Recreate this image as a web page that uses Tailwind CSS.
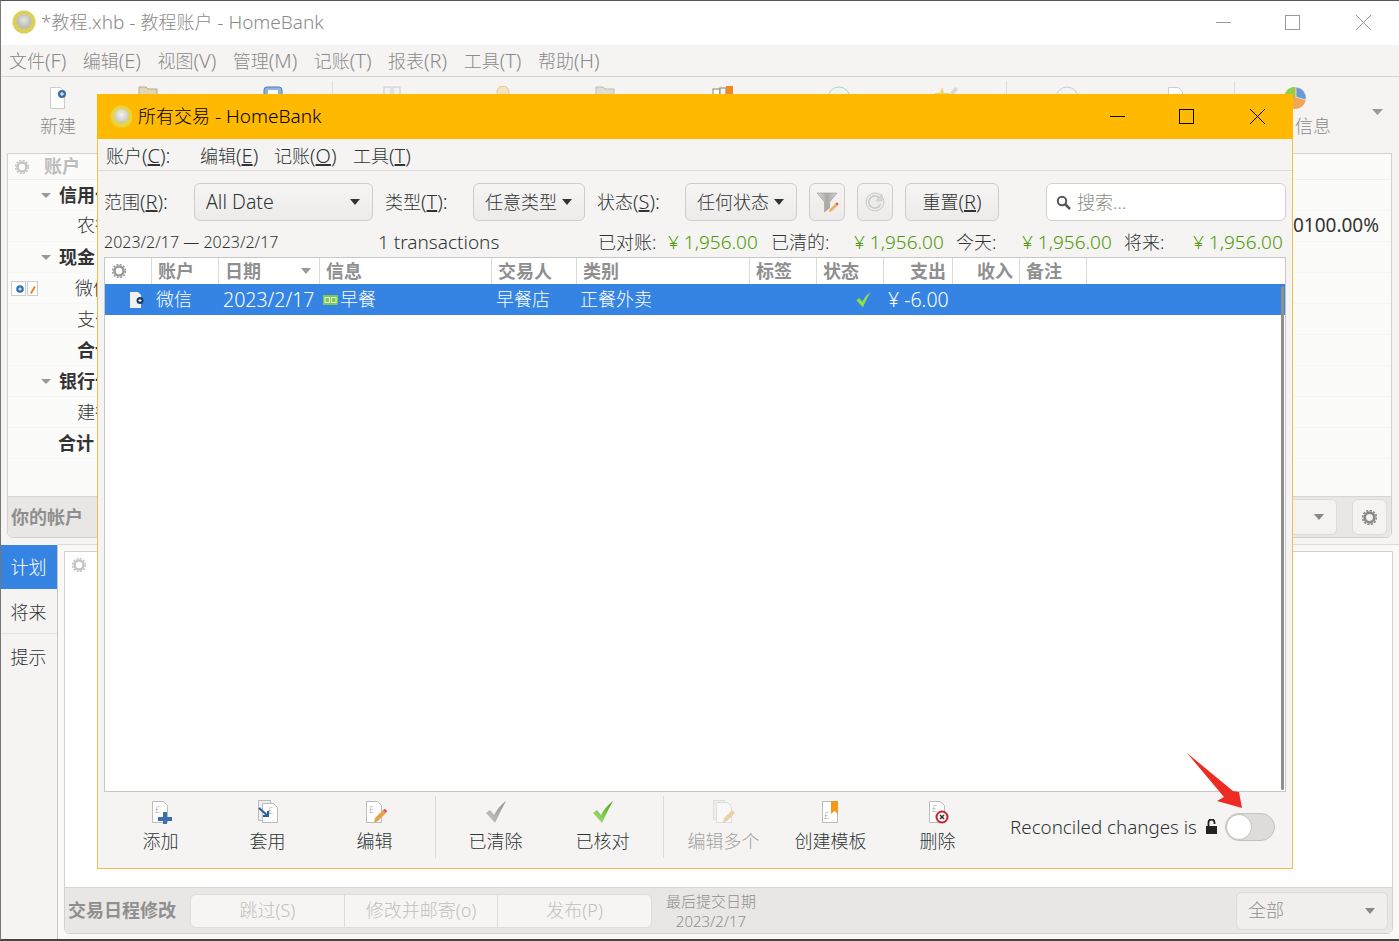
<!DOCTYPE html>
<html lang="zh-CN">
<head>
<meta charset="UTF-8">
<title>HomeBank</title>
<script src="https://cdn.jsdelivr.net/npm/@tailwindcss/browser@4"></script>
</head>
<body class="bg-[#f5f4f3]">
<div class="relative w-[1399px] h-[941px] overflow-hidden flex flex-col border-t border-t-[#555] border-l border-l-[#777] border-b-2 border-b-[#444] text-[18px] text-[#2e3436] font-['Noto_Sans','Noto_Sans_CJK_SC',sans-serif] font-light">

  <!-- main window -->
  <div class="h-[44px] shrink-0 bg-white flex items-center pb-[2px]">
    <svg class="ml-[11px] w-[24px] h-[24px]" viewBox="0 0 24 24"><defs><radialGradient id="coin" cx="50%" cy="40%" r="60%"><stop offset="0" stop-color="#e6e6e2"/><stop offset="1" stop-color="#b4b4ae"/></radialGradient></defs><circle cx="12" cy="12" r="11.500" fill="#dccf55"/><circle cx="12" cy="11.500" r="7.500" fill="url(#coin)"/></svg>
    <span class="ml-[5px] text-[#8a8a8a] text-[19px]">*<span class="text-[18px]">教程</span>.xhb - <span class="text-[18px]">教程账户</span> - HomeBank</span>
    <div class="ml-auto flex items-center mr-[28px]">
      <svg class="w-[15px] h-[15px] mr-[54px]" viewBox="0 0 15 15"><path d="M0 7.500h15" stroke="#999" fill="none"/></svg>
      <svg class="w-[15px] h-[15px] mr-[56px]" viewBox="0 0 15 15"><rect x=".5" y=".5" width="14" height="14" stroke="#999" fill="none"/></svg>
      <svg class="w-[15px] h-[15px]" viewBox="0 0 15 15"><path d="M0 0l15 15M15 0L0 15" stroke="#999" fill="none"/></svg>
    </div>
  </div>
  <div class="h-[32px] shrink-0 border-b border-[#d8d6d3] flex items-center gap-[16.500px] pl-[8px] pt-[1px] text-[#8a8a8a]">
    <span>文件<span class="text-[20px]">(F)</span></span><span>编辑<span class="text-[20px]">(E)</span></span><span>视图<span class="text-[20px]">(V)</span></span><span>管理<span class="text-[20px]">(M)</span></span><span>记账<span class="text-[20px]">(T)</span></span><span>报表<span class="text-[20px]">(R)</span></span><span>工具<span class="text-[20px]">(T)</span></span><span>帮助<span class="text-[20px]">(H)</span></span>
  </div>
  <div class="h-[76px] shrink-0 flex text-[#8a8a8a]">
    <div class="w-[114px] flex flex-col items-center pt-[9px]">
      <svg class="w-[24px] h-[24px]" viewBox="0 0 24 24"><path d="M4.500 1.500h10l4 4v17h-14z" fill="#fff" stroke="#ccc"/><circle cx="16" cy="8" r="4" fill="#3b6ea8"/><path d="M14 8h4M16 6v4" stroke="#fff"/></svg>
      <span class="mt-[3px]">新建</span>
    </div>
    <div class="w-[217px] flex items-start pt-[9px]">
      <svg class="ml-[21px] w-[24px] h-[24px]" viewBox="0 0 24 24"><path d="M3 1h7l2 2h9v18H3z" fill="#e2d6b4" stroke="#b8ac8c"/></svg>
      <svg class="ml-[101px] w-[24px] h-[24px]" viewBox="0 0 24 24"><rect x="3" y="1" width="18" height="20" rx="3" fill="#8fb2dc" stroke="#4d7fb8"/><rect x="7" y="4" width="10" height="5" fill="#fff"/></svg>
    </div>
    <div class="w-[1px] h-[50px] bg-[#ddd] mt-[4px]"></div>
    <div class="w-[673px] flex items-start pt-[9px]">
      <svg class="ml-[48px] w-[24px] h-[24px]" viewBox="0 0 24 24"><rect x="3" y="1" width="7" height="20" fill="#f2f2f2" stroke="#ccc"/><rect x="12" y="1" width="7" height="20" fill="#f2f2f2" stroke="#ccc"/></svg>
      <svg class="ml-[83px] w-[24px] h-[24px]" viewBox="0 0 24 24"><circle cx="15" cy="6" r="6" fill="#f5e3c0" stroke="#e0c490"/><path d="M1 21V12q0-5 14-5v14z" fill="#f5e3c0"/></svg>
      <svg class="ml-[81px] w-[24px] h-[24px]" viewBox="0 0 24 24"><path d="M3 1h7l2 2h9v18H3z" fill="#e0ddd2" stroke="#bbb"/></svg>
      <svg class="ml-[94px] w-[24px] h-[24px]" viewBox="0 0 24 24"><rect x="2" y="3" width="7" height="18" fill="#fff" stroke="#886"/><rect x="9" y="2" width="6" height="19" fill="#f2f2f2" stroke="#886"/><rect x="15" y="0" width="7" height="21" fill="#f08a24"/></svg>
      <svg class="ml-[92px] w-[24px] h-[24px]" viewBox="0 0 24 24"><circle cx="12" cy="12" r="11" fill="#eef6f0" stroke="#b4d2c2"/></svg>
      <svg class="ml-[84px] w-[24px] h-[24px]" viewBox="0 0 24 24"><path d="M7 1l2 6h6l-5 4 2 6-5-4-5 4 2-6-5-4h6z" fill="#ecd674"/><path d="M15 7l5-6 3 2-5 7z" fill="#d8d8d2"/></svg>
    </div>
    <div class="w-[1px] h-[50px] bg-[#ddd] mt-[4px]"></div>
    <div class="w-[227px] flex items-start pt-[9px]">
      <svg class="ml-[48px] w-[24px] h-[24px]" viewBox="0 0 24 24"><circle cx="12" cy="12" r="11" fill="#f4f4f4" stroke="#ccc"/></svg>
      <svg class="ml-[85px] w-[24px] h-[24px]" viewBox="0 0 24 24"><path d="M4.500 1.500h10l4 4v17h-14z" fill="#fff" stroke="#ccc"/></svg>
    </div>
    <div class="w-[1px] h-[50px] bg-[#ddd] mt-[4px]"></div>
    <div class="w-[72px] ml-[24px] flex flex-col items-center pt-[9px]">
      <svg class="w-[24px] h-[24px]" viewBox="0 0 24 24"><circle cx="12" cy="12" r="11" fill="#f0a858"/><path d="M12 12V1A11 11 0 0 0 2 8z" fill="#8fd050"/><path d="M13 11V1A11 11 0 0 1 23 14z" fill="#6a9ad0" stroke="#fff" stroke-width=".6"/></svg>
      <span class="mt-[3px]">账户信息</span>
    </div>
    <svg class="ml-[41px] mt-[32px] w-[11px] h-[6px]" viewBox="0 0 11 6"><path d="M0 0h11L5.500 6z" fill="#999"/></svg>
  </div>
  <div class="ml-[6px] mr-[7px] h-[385px] shrink-0 border border-[#d3d1ce] rounded-b-md bg-[#fbfbfa] flex flex-col">
    <div class="h-[26px] border-b border-[#f0f0ef] flex items-center pl-[7px] text-[#bdbdbd] font-bold">
      <svg class="w-[14px] h-[14px]" viewBox="0 0 14 14"><circle cx="7" cy="7" r="4.500" fill="none" stroke="#c4c4c4" stroke-width="2.500"/><circle cx="7" cy="7" r="6.500" fill="none" stroke="#c4c4c4" stroke-width="1.500" stroke-dasharray="2 1.400"/></svg>
      <span class="ml-[15px]">账户</span>
    </div>
    <div class="flex-1 flex flex-col text-[#333]">
      <div class="h-[31px] flex items-center border-b border-[#f6f6f5] pl-[33px] font-bold"><span class="mr-[8px] border-x-[5px] border-x-transparent border-t-[5px] border-t-[#999]"></span>信用卡</div>
      <div class="h-[31px] flex items-center border-b border-[#f6f6f5] pl-[69px] pb-[2px]">农行<span class="ml-auto mr-[12px] text-[19px] font-normal">0100.00%</span></div>
      <div class="h-[31px] flex items-center border-b border-[#f6f6f5] pl-[33px] font-bold"><span class="mr-[8px] border-x-[5px] border-x-transparent border-t-[5px] border-t-[#999]"></span>现金</div>
      <div class="h-[31px] flex items-center border-b border-[#f6f6f5] pl-[3px]">
        <svg class="w-[15px] h-[15px]" viewBox="0 0 15 15"><rect x=".5" y=".5" width="14" height="14" fill="#fff" stroke="#ccc"/><circle cx="9" cy="8" r="3.800" fill="#2f6fb0"/><path d="M7.300 8h3.400M9 6.300v3.400" stroke="#fff"/></svg>
        <svg class="w-[11px] h-[15px] ml-[1px] mr-[37px]" viewBox="0 0 11 15"><rect x=".5" y=".5" width="10" height="14" fill="#fff" stroke="#ccc"/><path d="M3 12l4-7 1.800 1-4 7z" fill="#e08a2c"/></svg>
        微信
      </div>
      <div class="h-[31px] flex items-center border-b border-[#f6f6f5] pl-[69px]">支付宝</div>
      <div class="h-[31px] flex items-center border-b border-[#f6f6f5] pl-[69px] font-bold">合计</div>
      <div class="h-[31px] flex items-center border-b border-[#f6f6f5] pl-[33px] font-bold"><span class="mr-[8px] border-x-[5px] border-x-transparent border-t-[5px] border-t-[#999]"></span>银行卡</div>
      <div class="h-[31px] flex items-center border-b border-[#f6f6f5] pl-[69px]">建行</div>
      <div class="h-[31px] flex items-center border-b border-[#f6f6f5] pl-[50px] font-bold">合计</div>
    </div>
    <div class="h-[41px] bg-[#e8e7e5] border-t border-[#d8d6d3] rounded-b-md flex items-center pl-[3px] text-[#8f8f8f] font-bold">
      你的帐户
      <div class="ml-auto flex items-center">
        <div class="w-[100px] h-[36px] border border-[#dedcd9] rounded-md bg-[#f4f3f2] flex items-center justify-end pr-[12px]"><svg class="w-[10px] h-[6px]" viewBox="0 0 10 6"><path d="M0 0h10L5 6z" fill="#888"/></svg></div>
        <div class="ml-[15px] mr-[4px] w-[35px] h-[36px] border border-[#dedcd9] rounded-md bg-[#f4f3f2] flex items-center justify-center"><svg class="w-[15px] h-[15px]" viewBox="0 0 14 14"><circle cx="7" cy="7" r="4.500" fill="none" stroke="#888" stroke-width="2.500"/><circle cx="7" cy="7" r="6.500" fill="none" stroke="#888" stroke-width="1.500" stroke-dasharray="2 1.400"/></svg></div>
      </div>
    </div>
  </div>
  <div class="flex-1 flex mt-[7px] mb-[5px] min-h-0">
    <div class="w-[57px] shrink-0 border-r border-[#c8c6c3] flex flex-col -mb-[5px]">
      <div class="h-[44px] bg-[#3584e4] text-white flex items-center justify-center pr-[1px]">计划</div>
      <div class="h-[45px] pt-[3px] pr-[1px] border-b border-[#e3e2e0] flex items-center justify-center">将来</div>
      <div class="h-[45px] pt-[2px] pr-[1px] flex items-center justify-center">提示</div>
    </div>
    <div class="flex-1 flex flex-col border-t border-[#dcdad7] bg-[#faf9f8] -mt-px -mb-[5px] pb-[5px] pt-[6px] pl-[6px] pr-[6px]">
      <div class="flex-1 border border-[#d3d1ce] rounded-b-md bg-white flex flex-col">
        <div class="h-[26px] flex items-center pl-[7px]"><svg class="w-[14px] h-[14px]" viewBox="0 0 14 14"><circle cx="7" cy="7" r="4.500" fill="none" stroke="#c4c4c4" stroke-width="2.500"/><circle cx="7" cy="7" r="6.500" fill="none" stroke="#c4c4c4" stroke-width="1.500" stroke-dasharray="2 1.400"/></svg></div>
        <div class="flex-1"></div>
        <div class="h-[46px] bg-[#e8e7e5] border-t border-[#d8d6d3] rounded-b-md flex items-center pl-[3px] text-[#8f8f8f]">
          <span class="font-bold w-[122px]">交易日程修改</span>
          <div class="flex h-[34px] w-[462px] border border-[#dedcd9] rounded-md bg-[#f6f5f4] text-[#c0c0c0]">
            <span class="flex-1 flex items-center justify-center border-r border-[#dedcd9]">跳过(S)</span>
            <span class="flex-1 flex items-center justify-center border-r border-[#dedcd9]">修改并邮寄(o)</span>
            <span class="flex-1 flex items-center justify-center">发布(P)</span>
          </div>
          <div class="ml-[14px] w-[90px] flex flex-col items-center text-[15px] leading-[20px]"><span>最后提交日期</span><span>2023/2/17</span></div>
          <div class="ml-auto mr-[4px] w-[152px] h-[38px] border border-[#dedcd9] rounded-md bg-[#f0efee] flex items-center pl-[11px]">全部<svg class="ml-auto mr-[12px] w-[10px] h-[6px]" viewBox="0 0 10 6"><path d="M0 0h10L5 6z" fill="#888"/></svg></div>
        </div>
      </div>
    </div>
  </div>

  <!-- dialog window on top -->
  <div class="absolute left-[96px] top-[93px] w-[1196px] h-[775px] bg-[#f5f4f3] border-x border-b border-[#efc050] flex flex-col">
    <div class="h-[45px] shrink-0 -mx-px bg-[#ffb900] flex items-center text-black font-normal">
      <svg class="ml-[13px] w-[23px] h-[23px]" viewBox="0 0 24 24"><defs><radialGradient id="coin2" cx="50%" cy="40%" r="60%"><stop offset="0" stop-color="#f2f2ee"/><stop offset="1" stop-color="#c4c4bc"/></radialGradient></defs><circle cx="12" cy="12" r="11.500" fill="#e8d440"/><circle cx="12" cy="11.500" r="7.500" fill="url(#coin2)"/></svg>
      <span class="ml-[5px] font-light text-[19px]"><span class="text-[18px]">所有交易</span> - HomeBank</span>
      <div class="ml-auto flex items-center mr-[28px]">
        <svg class="w-[15px] h-[15px] mr-[54px]" viewBox="0 0 15 15"><path d="M0 7.500h15" stroke="#000" fill="none"/></svg>
        <svg class="w-[15px] h-[15px] mr-[56px]" viewBox="0 0 15 15"><rect x=".5" y=".5" width="14" height="14" stroke="#000" fill="none"/></svg>
        <svg class="w-[15px] h-[15px]" viewBox="0 0 15 15"><path d="M0 0l15 15M15 0L0 15" stroke="#000" fill="none"/></svg>
      </div>
    </div>
    <div class="h-[32px] shrink-0 border-b border-[#dcdad7] flex items-center pl-[8px] pt-[3px]">
      <span class="w-[94px]">账户<span class="text-[20px]">(<u>C</u>):</span></span><span class="w-[74px]">编辑<span class="text-[20px]">(<u>E</u>)</span></span><span class="w-[79px]">记账<span class="text-[20px]">(<u>O</u>)</span></span><span>工具<span class="text-[20px]">(<u>T</u>)</span></span>
    </div>
    <div class="h-[38px] mt-[12px] shrink-0 flex items-center pl-[6px]">
      <span class="w-[90px]">范围<span class="text-[20px]">(<u>R</u>):</span></span>
      <div class="w-[179px] h-[38px] border border-[#cfcdc9] rounded-md bg-linear-to-b from-[#f6f5f4] to-[#edebe9] flex items-center pl-[11px] text-[19.500px]">All Date<svg class="ml-auto mr-[12px] w-[10px] h-[6px]" viewBox="0 0 10 6"><path d="M0 0h10L5 6z" fill="#2e3436"/></svg></div>
      <span class="ml-[12px] w-[88px]">类型<span class="text-[20px]">(<u>T</u>):</span></span>
      <div class="w-[112px] h-[38px] border border-[#cfcdc9] rounded-md bg-linear-to-b from-[#f6f5f4] to-[#edebe9] flex items-center pl-[11px]">任意类型<svg class="ml-[5px] w-[10px] h-[6px]" viewBox="0 0 10 6"><path d="M0 0h10L5 6z" fill="#2e3436"/></svg></div>
      <span class="ml-[12px] w-[88px]">状态<span class="text-[20px]">(<u>S</u>):</span></span>
      <div class="w-[112px] h-[38px] border border-[#cfcdc9] rounded-md bg-linear-to-b from-[#f6f5f4] to-[#edebe9] flex items-center pl-[11px]">任何状态<svg class="ml-[5px] w-[10px] h-[6px]" viewBox="0 0 10 6"><path d="M0 0h10L5 6z" fill="#2e3436"/></svg></div>
      <div class="ml-[12px] w-[36px] h-[38px] border border-[#cfcdc9] rounded-md bg-linear-to-b from-[#f6f5f4] to-[#edebe9] flex items-center justify-center">
        <svg class="w-[24px] h-[24px]" viewBox="0 0 24 24"><defs><linearGradient id="fun" x1="0" x2="1" y1="0" y2="0"><stop offset="0" stop-color="#dcdcd8"/><stop offset=".5" stop-color="#a8a8a4"/><stop offset="1" stop-color="#d4d4d0"/></linearGradient></defs><path d="M2 3h20l-7.500 9v6l-5 4V12z" fill="url(#fun)" stroke="#8a8a85" stroke-width=".5"/><path d="M14 22l.5-2.500 6-6 2 2-6 6z" fill="#eeb060"/><path d="M20.500 13.500l2 2 1-1.500-1.500-1.500z" fill="#d9454a"/></svg>
      </div>
      <div class="ml-[12px] w-[36px] h-[38px] border border-[#cfcdc9] rounded-md bg-linear-to-b from-[#f6f5f4] to-[#edebe9] flex items-center justify-center">
        <svg class="w-[22px] h-[22px]" viewBox="0 0 22 22"><circle cx="11" cy="11" r="9" fill="#ececea" stroke="#c8c8c4"/><path d="M16 8a6 6 0 1 0 .5 5" fill="none" stroke="#c8c8c4" stroke-width="1.500"/><path d="M18 3v7h-6z" fill="#d8d8d4" stroke="#c0c0bc" stroke-width=".5"/></svg>
      </div>
      <div class="ml-[12px] w-[94px] h-[38px] border border-[#cfcdc9] rounded-md bg-linear-to-b from-[#f6f5f4] to-[#edebe9] flex items-center justify-center"><span>重置<span class="text-[20px]">(<u>R</u>)</span></span></div>
      <div class="ml-[47px] w-[240px] h-[38px] border border-[#d3d1ce] rounded-md bg-white flex items-center pl-[9px] text-[#8a8a8a]">
        <svg class="w-[15px] h-[15px] mr-[6px]" viewBox="0 0 15 15"><circle cx="6" cy="6" r="4.200" fill="none" stroke="#555" stroke-width="2"/><path d="M9 9l5 5" stroke="#555" stroke-width="2.500"/></svg>
        搜索...
      </div>
    </div>
    <div class="h-[36px] shrink-0 flex items-center pl-[6px] pt-[6px]">
      <span class="text-[16px] w-[274px]">2023/2/17 — 2023/2/17</span>
      <span class="w-[220px] text-[19px]">1 transactions</span>
      <span class="w-[70px]">已对账:</span><span class="w-[103px] text-[19px] text-[#4e9a06]">¥ 1,956.00</span>
      <span class="w-[83px]">已清的:</span><span class="w-[102px] text-[19px] text-[#4e9a06]">¥ 1,956.00</span>
      <span class="w-[66px]">今天:</span><span class="w-[102px] text-[19px] text-[#4e9a06]">¥ 1,956.00</span>
      <span class="w-[69px]">将来:</span><span class="text-[19px] text-[#4e9a06]">¥ 1,956.00</span>
    </div>
    <div class="mx-[6px] h-[535px] shrink-0 border border-[#c9c7c4] bg-white flex flex-col relative">
      <div class="h-[26px] shrink-0 flex text-[#8f8f8f] font-bold">
        <div class="w-[47px] border-r border-[#dcdad7] flex items-center pl-[7px]"><svg class="w-[14px] h-[14px]" viewBox="0 0 14 14"><circle cx="7" cy="7" r="4.500" fill="none" stroke="#999" stroke-width="2.500"/><circle cx="7" cy="7" r="6.500" fill="none" stroke="#999" stroke-width="1.500" stroke-dasharray="2 1.400"/></svg></div>
        <div class="w-[67px] border-r border-[#dcdad7] flex items-center pl-[6px]">账户</div>
        <div class="w-[101px] border-r border-[#dcdad7] flex items-center pl-[6px]">日期<svg class="ml-auto mr-[8px] w-[10px] h-[6px]" viewBox="0 0 10 6"><path d="M0 0h10L5 6z" fill="#999"/></svg></div>
        <div class="w-[172px] border-r border-[#dcdad7] flex items-center pl-[6px]">信息</div>
        <div class="w-[85px] border-r border-[#dcdad7] flex items-center pl-[6px]">交易人</div>
        <div class="w-[173px] border-r border-[#dcdad7] flex items-center pl-[6px]">类别</div>
        <div class="w-[67px] border-r border-[#dcdad7] flex items-center pl-[6px]">标签</div>
        <div class="w-[67px] border-r border-[#dcdad7] flex items-center pl-[6px]">状态</div>
        <div class="w-[69px] border-r border-[#dcdad7] flex items-center justify-end pr-[6px]">支出</div>
        <div class="w-[67px] border-r border-[#dcdad7] flex items-center justify-end pr-[6px]">收入</div>
        <div class="w-[67px] border-r border-[#dcdad7] flex items-center pl-[6px]">备注</div>
      </div>
      <div class="h-[31px] shrink-0 bg-[#3584e4] text-white flex items-center">
        <div class="w-[47px] pl-[23px]">
          <svg class="w-[18px] h-[18px]" viewBox="0 0 18 18"><path d="M2 1h8l3 3v13H2z" fill="#f2f2f2"/><circle cx="12" cy="9.500" r="3.500" fill="#1d3f66"/><path d="M10.500 9.500h3M12 8v3" stroke="#fff"/></svg>
        </div>
        <div class="w-[67px] pl-[4px]">微信</div>
        <div class="w-[101px] pl-[4px] text-[19.500px]">2023/2/17</div>
        <div class="w-[172px] pl-[3px] flex items-center">
          <svg class="w-[15px] h-[10px] mr-[2px]" viewBox="0 0 15 10"><rect width="15" height="10" fill="#7ec850"/><rect x="2" y="2.500" width="4.500" height="5" fill="none" stroke="#fff" stroke-width=".8"/><rect x="8.500" y="2.500" width="4.500" height="5" fill="none" stroke="#fff" stroke-width=".8"/></svg>
          早餐
        </div>
        <div class="w-[85px] pl-[4px]">早餐店</div>
        <div class="w-[173px] pl-[3px]">正餐外卖</div>
        <div class="w-[67px]"></div>
        <div class="w-[67px] flex justify-end pr-[12px]">
          <svg class="w-[17px] h-[17px]" viewBox="0 0 24 24"><path d="M2 13L6 10L10 15Q14 7 22 1Q17 10 11 23Z" fill="#8fe04a"/></svg>
        </div>
        <div class="w-[69px] pl-[4px] text-[19.500px]">¥ -6.00</div>
      </div>
      <div class="absolute right-[1px] top-[28px] bottom-[1px] w-[3px] rounded-full bg-[#8f8f8f]"></div>
    </div>
    <div class="flex-1 flex items-center pl-[9px] pb-[6px]">
      <div class="w-[107px] flex flex-col items-center">
        <svg class="w-[24px] h-[24px]" viewBox="0 0 24 24"><path d="M3.500 1.500h11l4 4v17h-15z" fill="#fff" stroke="#bbb"/><text x="6" y="13" font-size="9" fill="#aaa">£</text><path d="M14 12h4v5h5v4h-5v3h-4v-3H9v-4h5z" fill="#3b70b0"/></svg>
        <span class="mt-[4px]">添加</span>
      </div>
      <div class="w-[107px] flex flex-col items-center">
        <svg class="w-[24px] h-[24px]" viewBox="0 0 24 24"><path d="M2.500.5h12v20h-12z" fill="#eee" stroke="#bbb"/><path d="M6.500 3.500h11l4 4v15h-15z" fill="#fff" stroke="#bbb"/><text x="12" y="14" font-size="9" fill="#aaa">£</text><path d="M3 8l9 8M12 11v5H7" stroke="#2b5c9c" stroke-width="2" fill="none"/></svg>
        <span class="mt-[4px]">套用</span>
      </div>
      <div class="w-[107px] flex flex-col items-center">
        <svg class="w-[24px] h-[24px]" viewBox="0 0 24 24"><path d="M3.500 1.500h11l4 4v17h-15z" fill="#fff" stroke="#bbb"/><text x="6" y="13" font-size="9" fill="#aaa">£</text><path d="M11 23l1-5 8-8 3 3-8 8z" fill="#e8a04a"/><path d="M20 10l3 3 1-2-2-2z" fill="#d9454a"/></svg>
        <span class="mt-[4px]">编辑</span>
      </div>
      <div class="w-[1px] h-[62px] bg-[#dcdad7] ml-[7px] mr-[6px]"></div>
      <div class="w-[107px] flex flex-col items-center">
        <svg class="w-[24px] h-[24px]" viewBox="0 0 24 24"><defs><linearGradient id="gr" x1="0" x2="1" y1="1" y2="0"><stop offset="0" stop-color="#c8c8c5"/><stop offset="1" stop-color="#8e8e8b"/></linearGradient></defs><path d="M2 13L6 10L10 15Q14 7 22 1Q17 10 11 23Z" fill="url(#gr)"/></svg>
        <span class="mt-[4px]">已清除</span>
      </div>
      <div class="w-[107px] flex flex-col items-center">
        <svg class="w-[24px] h-[24px]" viewBox="0 0 24 24"><defs><linearGradient id="gn" x1="0" x2="1" y1="1" y2="0"><stop offset="0" stop-color="#b0e878"/><stop offset="1" stop-color="#4aa020"/></linearGradient></defs><path d="M2 13L6 10L10 15Q14 7 22 1Q17 10 11 23Z" fill="url(#gn)"/></svg>
        <span class="mt-[4px]">已核对</span>
      </div>
      <div class="w-[1px] h-[62px] bg-[#dcdad7] ml-[7px] mr-[6px]"></div>
      <div class="w-[107px] flex flex-col items-center text-[#a0a0a0]">
        <svg class="w-[24px] h-[24px]" viewBox="0 0 24 24"><path d="M1.500.5h11v19h-11z" fill="#eee" stroke="#ddd"/><path d="M4.500 2.500h11l4 4v16h-15z" fill="#f8f8f8" stroke="#ddd"/><path d="M11 23l1-5 8-8 3 3-8 8z" fill="#ebcfa8"/></svg>
        <span class="mt-[4px]">编辑多个</span>
      </div>
      <div class="w-[107px] flex flex-col items-center">
        <svg class="w-[24px] h-[24px]" viewBox="0 0 24 24"><path d="M3.500 1.500h11l4 4v17h-15z" fill="#fff" stroke="#bbb"/><text x="5" y="19" font-size="9" fill="#aaa">£</text><path d="M12 1h7v13l-3.500-3L12 14z" fill="#f39a1c"/></svg>
        <span class="mt-[4px]">创建模板</span>
      </div>
      <div class="w-[107px] flex flex-col items-center">
        <svg class="w-[24px] h-[24px]" viewBox="0 0 24 24"><path d="M3.500 1.500h11l4 4v17h-15z" fill="#fff" stroke="#bbb"/><text x="6" y="12" font-size="9" fill="#aaa">£</text><circle cx="16" cy="17" r="5.500" fill="#fff" stroke="#c8202c" stroke-width="2"/><path d="M14 15l4 4M18 15l-4 4" stroke="#333" stroke-width="1.500"/></svg>
        <span class="mt-[4px]">删除</span>
      </div>
      <span class="ml-[19px] w-[187px] mr-[8px] text-[18.800px] whitespace-nowrap">Reconciled changes is</span>
      <svg class="w-[13px] h-[16px]" viewBox="0 0 13 16"><path d="M3.500 7V3.500a3 3 0 0 1 6 0V5" fill="none" stroke="#222" stroke-width="1.800"/><rect x="1" y="7" width="11" height="8" fill="#222"/></svg>
      <div class="ml-[7px] w-[50px] h-[28px] rounded-full bg-[#dedcd9] border border-[#c4c2bf] flex items-center">
        <div class="w-[26px] h-[26px] rounded-full bg-white border border-[#c4c2bf]"></div>
      </div>
    </div>
  </div>

  <!-- annotation arrow -->
  <svg class="absolute left-[1185px] top-[751px] w-[60px] h-[60px]" viewBox="0 0 60 60"><path d="M1 1L47 39L53 40L56 56L31 49L38 45Z" fill="#ee2a24"/></svg>
</div>
</body>
</html>
